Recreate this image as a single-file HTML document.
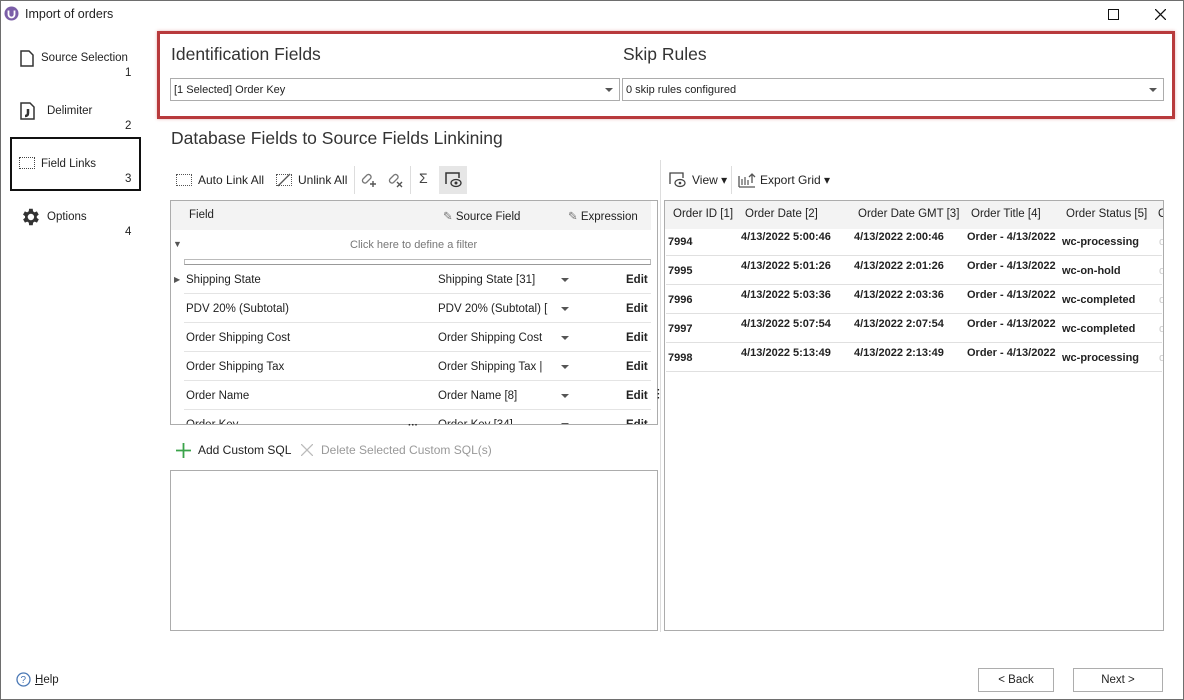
<!DOCTYPE html>
<html><head><meta charset="utf-8"><style>
*{box-sizing:border-box;margin:0;padding:0}
body{width:1184px;height:700px;background:#fff;font-family:"Liberation Sans",sans-serif;font-size:12px;color:#222;position:relative;overflow:hidden}
.a{position:absolute;white-space:nowrap}
.win{position:absolute;left:0;top:0;width:1184px;height:700px;border:1px solid #6e6e6e}
.h{font-size:17.5px;color:#333}
.combo{position:absolute;height:23px;border:1px solid #acacac;background:#fff;font-size:11px;padding:5px 3px;color:#222}
.combo:after{content:"";position:absolute;right:6px;top:9px;border:4px solid transparent;border-top:4px solid #555}
.box{position:absolute;border:1px solid #acacac;background:#fff}
.row{position:absolute;left:13px;right:6px;height:29px;border-bottom:1px solid #e4e4e4;font-size:11.5px}
.row span{position:absolute;top:9px}
.dd{position:absolute;left:377px;top:13px;border:4px solid transparent;border-top:4px solid #555}
.b{font-weight:bold}
.rr{position:absolute;left:1px;right:1px;height:29px;border-bottom:1px solid #e0e0e0;font-size:11px;font-weight:bold}
.rr span{position:absolute}
.btn{position:absolute;height:24px;border:1px solid #adadad;background:#fff;text-align:center;line-height:22px;font-size:11.5px}
</style></head><body>
<div class="win"></div>
<svg class="a" style="left:4px;top:6px" width="15" height="15"><circle cx="7.5" cy="7.5" r="7" fill="#7b5ea8"/><path d="M4.5 4.5v4a3 3 0 0 0 6 0v-4" stroke="#fff" stroke-width="1.8" fill="none"/></svg>
<div class="a" style="left:25px;top:7px;font-size:12.5px">Import of orders</div>
<div class="a" style="left:1108px;top:9px;width:11px;height:11px;border:1.3px solid #111"></div>
<svg class="a" style="left:1155px;top:9px" width="11" height="11"><path d="M0 0L11 11M11 0L0 11" stroke="#111" stroke-width="1.3"/></svg>

<!-- sidebar -->
<svg class="a" style="left:19px;top:50px" width="16" height="17"><path d="M2 1h8l4 4v11H2z" fill="none" stroke="#333" stroke-width="1.5"/></svg>
<div class="a" style="left:41px;top:52px;font-size:11.5px">Source Selection</div>
<div class="a" style="left:125px;top:67px;font-size:11.5px">1</div>
<svg class="a" style="left:20px;top:102px" width="16" height="18"><path d="M1 1h9l4 4v12H1z" fill="none" stroke="#333" stroke-width="1.5"/><path d="M8 7v4c0 2-1 3-3 3" stroke="#333" stroke-width="2.5" fill="none"/></svg>
<div class="a" style="left:47px;top:105px;font-size:11.5px">Delimiter</div>
<div class="a" style="left:125px;top:120px;font-size:11.5px">2</div>
<div class="a" style="left:10px;top:137px;width:131px;height:54px;border:2px solid #111"></div>
<div class="a" style="left:19px;top:157px;width:16px;height:12px;border:1.5px dotted #444"></div>
<div class="a" style="left:41px;top:158px;font-size:11.5px">Field Links</div>
<div class="a" style="left:125px;top:173px;font-size:11.5px">3</div>
<svg class="a" style="left:19px;top:206px" width="22" height="22" viewBox="0 0 24 24"><path fill="#333" d="M19.4 13a7.5 7.5 0 0 0 0-2l2.1-1.6-2-3.5-2.5 1a7 7 0 0 0-1.7-1L15 3h-4l-.4 2.9a7 7 0 0 0-1.7 1l-2.5-1-2 3.5L6.6 11a7.5 7.5 0 0 0 0 2l-2.1 1.6 2 3.5 2.5-1a7 7 0 0 0 1.7 1L11 21h4l.4-2.9a7 7 0 0 0 1.7-1l2.5 1 2-3.5zM13 15.5a3.5 3.5 0 1 1 0-7 3.5 3.5 0 0 1 0 7z"/></svg>
<div class="a" style="left:47px;top:211px;font-size:11.5px">Options</div>
<div class="a" style="left:125px;top:226px;font-size:11.5px">4</div>
<svg class="a" style="left:16px;top:672px" width="15" height="15"><circle cx="7.5" cy="7.5" r="6.5" fill="none" stroke="#4a78b5" stroke-width="1.3"/><text x="4.5" y="11" font-size="10" fill="#4a78b5" font-family="Liberation Sans">?</text></svg>
<div class="a" style="left:35px;top:674px;font-size:11.5px"><u>H</u>elp</div>

<!-- header red box -->
<div class="a" style="left:157px;top:31px;width:1018px;height:88px;border:3px solid #b83a3c;box-shadow:0 0 3px rgba(192,57,59,.4)"></div>
<div class="a h" style="left:171px;top:44px">Identification Fields</div>
<div class="a h" style="left:623px;top:44px">Skip Rules</div>
<div class="combo" style="left:170px;top:78px;width:450px">[1 Selected] Order Key</div>
<div class="combo" style="left:622px;top:78px;width:542px">0 skip rules configured</div>
<div class="a h" style="left:171px;top:128px">Database Fields to Source Fields Linkining</div>

<!-- left toolbar -->
<div class="a" style="left:176px;top:174px;width:16px;height:12px;border:1.5px dotted #555"></div>
<div class="a" style="left:198px;top:173px;font-size:12px">Auto Link All</div>
<div class="a" style="left:276px;top:174px;width:16px;height:12px;border:1.5px dotted #555"></div>
<svg class="a" style="left:276px;top:172px" width="16" height="16"><path d="M2 14L14 2" stroke="#555" stroke-width="1.3"/></svg>
<div class="a" style="left:298px;top:173px;font-size:12px">Unlink All</div>
<div class="a" style="left:354px;top:166px;width:1px;height:28px;background:#ddd"></div>
<svg class="a" style="left:360px;top:170px" width="18" height="18"><path d="M3 9l4-4a2.5 2.5 0 0 1 3.5 3.5l-4 4A2.5 2.5 0 0 1 3 9z" fill="none" stroke="#777" stroke-width="1.3"/><path d="M13 11v6M10 14h6" stroke="#555" stroke-width="1.4"/></svg>
<svg class="a" style="left:387px;top:170px" width="18" height="18"><path d="M3 9l4-4a2.5 2.5 0 0 1 3.5 3.5l-4 4A2.5 2.5 0 0 1 3 9z" fill="none" stroke="#777" stroke-width="1.3"/><path d="M10 12l5 5M15 12l-5 5" stroke="#555" stroke-width="1.4"/></svg>
<div class="a" style="left:410px;top:166px;width:1px;height:28px;background:#ddd"></div>
<div class="a" style="left:419px;top:170px;font-size:14px;color:#444">Σ</div>
<div class="a" style="left:439px;top:166px;width:28px;height:28px;background:#e6e6e6"></div>
<svg class="a" style="left:445px;top:172px" width="17" height="16"><path d="M1 12V1h13v5" fill="none" stroke="#333" stroke-width="1.5"/><ellipse cx="11" cy="11" rx="5" ry="3.5" fill="none" stroke="#333" stroke-width="1.3"/><circle cx="11" cy="11" r="1.5" fill="#333"/></svg>

<!-- left grid -->
<div class="box" style="left:170px;top:200px;width:488px;height:225px;overflow:hidden">
 <div class="a" style="left:0;top:0;width:480px;height:29px;background:#f3f3f3"></div>
 <div class="a" style="left:18px;top:8px;font-size:11.5px">Field</div>
 <div class="a" style="left:272px;top:8px;font-size:11.5px;color:#777">✎ <span style="color:#222">Source Field</span></div>
 <div class="a" style="left:397px;top:8px;font-size:11.5px;color:#777">✎ <span style="color:#222">Expression</span></div>
 <div class="a" style="left:13px;top:29px;width:467px;height:29px;background:#fff"></div>
 <div class="a" style="left:2px;top:38px;font-size:9px;color:#555">▼</div>
 <div class="a" style="left:179px;top:38px;font-size:11px;color:#777">Click here to define a filter</div>
 <div class="a" style="left:13px;top:58px;width:467px;height:6px;border:1px solid #bbb;border-bottom:1px solid #999"></div>
 <div class="row" style="top:64px"><span style="left:-10px;font-size:8px;top:10px;color:#555">▶</span><span style="left:2px">Shipping State</span><span style="left:254px">Shipping State [31]</span><i class="dd"></i><span style="left:442px" class="b">Edit</span></div>
 <div class="row" style="top:93px"><span style="left:2px">PDV 20% (Subtotal)</span><span style="left:254px">PDV 20% (Subtotal) [</span><i class="dd"></i><span style="left:442px" class="b">Edit</span></div>
 <div class="row" style="top:122px"><span style="left:2px">Order Shipping Cost</span><span style="left:254px">Order Shipping Cost</span><i class="dd"></i><span style="left:442px" class="b">Edit</span></div>
 <div class="row" style="top:151px"><span style="left:2px">Order Shipping Tax</span><span style="left:254px">Order Shipping Tax |</span><i class="dd"></i><span style="left:442px" class="b">Edit</span></div>
 <div class="row" style="top:180px"><span style="left:2px">Order Name</span><span style="left:254px">Order Name [8]</span><i class="dd"></i><span style="left:442px" class="b">Edit</span></div>
 <div class="row" style="top:209px"><span style="left:2px">Order Key</span><span style="left:254px">Order Key [34]</span><i class="dd"></i><span style="left:442px" class="b">Edit</span></div>
</div>
<div class="a" style="left:408px;top:420px;font-size:10px;font-weight:bold">···</div>
<div class="a" style="left:657px;top:389px;font-size:10px;font-weight:bold;line-height:4px">·<br>·<br>·</div>

<svg class="a" style="left:176px;top:443px" width="15" height="15"><path d="M7.5 0v15M0 7.5h15" stroke="#3aa34a" stroke-width="1.8"/></svg>
<div class="a" style="left:198px;top:443px;font-size:12px">Add Custom SQL</div>
<svg class="a" style="left:301px;top:444px" width="12" height="12"><path d="M0 0L12 12M12 0L0 12" stroke="#bbb" stroke-width="1.3"/></svg>
<div class="a" style="left:321px;top:443px;font-size:12px;color:#999">Delete Selected Custom SQL(s)</div>
<div class="box" style="left:170px;top:470px;width:488px;height:161px"></div>

<!-- right panel -->
<div class="a" style="left:660px;top:160px;width:1px;height:472px;background:#ddd"></div>
<svg class="a" style="left:669px;top:172px" width="17" height="16"><path d="M1 12V1h13v5" fill="none" stroke="#444" stroke-width="1.3"/><ellipse cx="11" cy="11" rx="5" ry="3.5" fill="none" stroke="#444" stroke-width="1.2"/><circle cx="11" cy="11" r="1.3" fill="#444"/></svg>
<div class="a" style="left:692px;top:173px;font-size:12px">View ▾</div>
<div class="a" style="left:731px;top:166px;width:1px;height:28px;background:#ddd"></div>
<svg class="a" style="left:738px;top:171px" width="18" height="17"><path d="M1 16V5M1 16h16" stroke="#555" fill="none" stroke-width="1.3"/><path d="M4 14V8M7 14V6M10 14V9" stroke="#777" stroke-width="1.5"/><path d="M14 12V3M11 6l3-3 3 3" stroke="#555" fill="none" stroke-width="1.3"/></svg>
<div class="a" style="left:760px;top:173px;font-size:12px">Export Grid ▾</div>
<div class="box" style="left:664px;top:200px;width:500px;height:431px;overflow:hidden">
 <div class="a" style="left:0;top:0;width:500px;height:28px;background:#f3f3f3"></div>
 <div class="a" style="left:8px;top:7px;font-size:11.5px">Order ID [1]</div>
 <div class="a" style="left:80px;top:7px;font-size:11.5px">Order Date [2]</div>
 <div class="a" style="left:193px;top:7px;font-size:11.5px">Order Date GMT [3]</div>
 <div class="a" style="left:306px;top:7px;font-size:11.5px">Order Title [4]</div>
 <div class="a" style="left:401px;top:7px;font-size:11.5px">Order Status [5]</div>
 <div class="a" style="left:493px;top:7px;font-size:11.5px">O</div>
 <div class="rr" style="top:26px"><span style="left:2px;top:9px">7994</span><span style="left:75px;top:4px">4/13/2022 5:00:46</span><span style="left:188px;top:4px">4/13/2022 2:00:46</span><span style="left:301px;top:4px">Order - 4/13/2022</span><span style="left:396px;top:9px">wc-processing</span><span style="left:493px;top:9px;color:#ccc;font-weight:normal">o</span></div>
 <div class="rr" style="top:55px"><span style="left:2px;top:9px">7995</span><span style="left:75px;top:4px">4/13/2022 5:01:26</span><span style="left:188px;top:4px">4/13/2022 2:01:26</span><span style="left:301px;top:4px">Order - 4/13/2022</span><span style="left:396px;top:9px">wc-on-hold</span><span style="left:493px;top:9px;color:#ccc;font-weight:normal">o</span></div>
 <div class="rr" style="top:84px"><span style="left:2px;top:9px">7996</span><span style="left:75px;top:4px">4/13/2022 5:03:36</span><span style="left:188px;top:4px">4/13/2022 2:03:36</span><span style="left:301px;top:4px">Order - 4/13/2022</span><span style="left:396px;top:9px">wc-completed</span><span style="left:493px;top:9px;color:#ccc;font-weight:normal">o</span></div>
 <div class="rr" style="top:113px"><span style="left:2px;top:9px">7997</span><span style="left:75px;top:4px">4/13/2022 5:07:54</span><span style="left:188px;top:4px">4/13/2022 2:07:54</span><span style="left:301px;top:4px">Order - 4/13/2022</span><span style="left:396px;top:9px">wc-completed</span><span style="left:493px;top:9px;color:#ccc;font-weight:normal">o</span></div>
 <div class="rr" style="top:142px"><span style="left:2px;top:9px">7998</span><span style="left:75px;top:4px">4/13/2022 5:13:49</span><span style="left:188px;top:4px">4/13/2022 2:13:49</span><span style="left:301px;top:4px">Order - 4/13/2022</span><span style="left:396px;top:9px">wc-processing</span><span style="left:493px;top:9px;color:#ccc;font-weight:normal">o</span></div>
</div>

<div class="btn" style="left:978px;top:668px;width:76px">&lt; Back</div>
<div class="btn" style="left:1073px;top:668px;width:90px">Next &gt;</div>
</body></html>
